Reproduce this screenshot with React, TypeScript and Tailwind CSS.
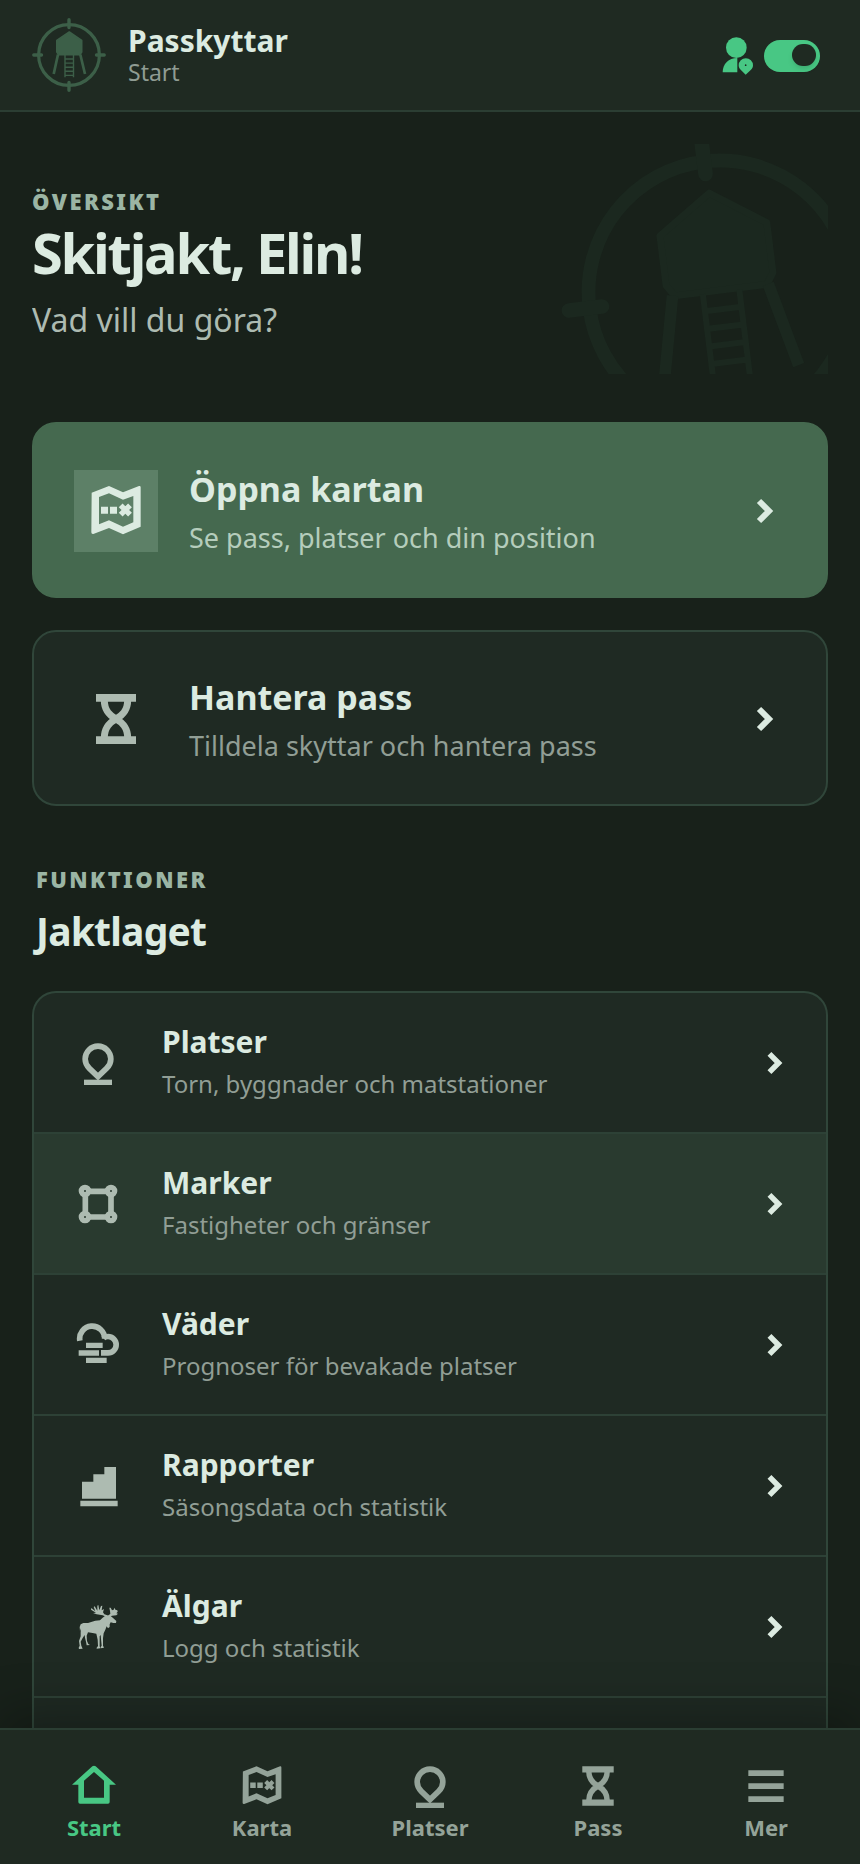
import type { ReactNode } from 'react'

type IconProps = { className?: string }

/* Icons */

function LogoMark({ className }: IconProps) {
  return (
    <svg viewBox="-37 -37 74 74" className={className} fill="none" stroke="currentColor" aria-hidden>
      <circle r="30.4" strokeWidth="3.2" />
      <path
        d="M0-35.2V-27.5M0 27.5V35.2M-35.2 0H-27.5M27.5 0H35.2"
        strokeWidth="3.4"
        strokeLinecap="round"
      />
      <path
        d="M.3-23-12.2-14.6V-3L-10.5-.4H11L12.7-3V-14.6Z"
        fill="currentColor"
        strokeWidth="1.6"
        strokeLinejoin="round"
      />
      <path d="M-11-.5-15.3 19M11.3-.5 16 19" strokeWidth="2.7" />
      <path d="M-4 0V22.3M4.5 0V22.3M-4 4H4.5M-4 8.1H4.5M-4 12.2H4.5M-4 16.3H4.5M-4 20.4H4.5" strokeWidth="1.4" />
    </svg>
  )
}

function UserPinIcon({ className }: IconProps) {
  return (
    <svg viewBox="0 0 96 114" className={className} fill="currentColor" aria-hidden>
      <circle cx="43" cy="32" r="31" />
      <path d="M2 106C2 80 20 63 46 63V106Z" />
      <path
        fillRule="evenodd"
        d="M71 113 56 98.500C52 95 50 90 50 85A21.500 21.500 0 0 1 93 85C93 90 91 95 87 98.500ZM71 82a2.500 2.500 0 1 0 0 5 2.500 2.500 0 0 0 0-5Z"
      />
    </svg>
  )
}

function MapIcon({ className }: IconProps) {
  return (
    <svg viewBox="0 0 168 168" className={className} fill="currentColor" aria-hidden>
      <path
        fillRule="evenodd"
        d="M11 29 63 9 105 28 153 9Q158 8 158 13V131L105 154 63 135 16 153Q10 154 10 148ZM33 42V124L63 112 105 131 136 118V39L105 50 63 31Z"
      />
      <path d="M39 71H60V92H39ZM66 71H87V92H66Z" />
      <path d="M98 67 126 95M126 67 98 95" stroke="currentColor" strokeWidth="16" />
    </svg>
  )
}

function HourglassIcon({ className }: IconProps) {
  return (
    <svg viewBox="0 0 168 168" className={className} fill="none" stroke="currentColor" aria-hidden>
      <path d="M24 20.500H144M24 147.500H144" strokeWidth="23" />
      <path d="M119 28C119 60 102 74 84 84S49 108 49 140M49 28C49 60 66 74 84 84S119 108 119 140" strokeWidth="21" />
    </svg>
  )
}

function PinIcon({ className }: IconProps) {
  return (
    <svg viewBox="0 0 132 132" className={className} fill="none" stroke="currentColor" aria-hidden>
      <path
        d="M66 107 40 82C32 74 27.500 65 27.500 54A38.500 38.500 0 0 1 104.500 54C104.500 65 100 74 92 82Z"
        strokeWidth="17"
      />
      <path d="M24 124H108" strokeWidth="16" />
    </svg>
  )
}

function AreaIcon({ className }: IconProps) {
  return (
    <svg viewBox="0 0 132 132" className={className} fill="none" stroke="currentColor" aria-hidden>
      <path d="M38 28H94M38 105H94M28 38V94M105 38V94" strokeWidth="17" />
      <g strokeWidth="16">
        <circle cx="27" cy="27" r="11" />
        <circle cx="105" cy="27" r="11" />
        <circle cx="27" cy="105" r="11" />
        <circle cx="105" cy="105" r="11" />
      </g>
    </svg>
  )
}

function WeatherIcon({ className }: IconProps) {
  return (
    <svg viewBox="0 0 132 132" className={className} fill="none" stroke="currentColor" strokeWidth="17" aria-hidden>
      <path d="M11.500 53A37.500 37.500 0 1 1 86 47" />
      <path d="M82 46C86 42 91 40.500 96 40.500A24.500 24.500 0 0 1 96 89.500H75" />
      <path d="M30 67H80M8 90H69M30 112H92" strokeWidth="16" />
    </svg>
  )
}

function ReportIcon({ className }: IconProps) {
  return (
    <svg viewBox="0 0 132 132" className={className} fill="currentColor" aria-hidden>
      <path d="M18 104V53H52V31H85V9H120V104ZM13 110H125V127H13Z" />
    </svg>
  )
}

function MooseIcon({ className }: IconProps) {
  return (
    <svg viewBox="0 0 132 132" className={className} fill="currentColor" aria-hidden>
      <path d="M14 58 22 54 36 54 48 50 58 47 72 46 80 38 88 32 96 31 104 33 112 40 121 48 120 54 112 54 104 52 101 58 101 66 96 70 92 64 88 74 83 85 81 100 81 122 84 128 74 130 74 126 77 122 75 102 74 90 71 94 71 124 73 130 62 131 62 128 66 123 65 104 61 86 50 84 36 82 32 92 33 108 37 117 42 120 32 121 30 110 27 98 26 90 20 99 14 110 16 122 20 131 9 132 8 128 11 122 9 108 14 94 14 82 15 70 12 78 11 66Z" />
      <path d="M92 36 80 31 62 28 51 24 60 23 45 14 46 9 58 19 53 6 56 4 64 17 64 2 67 0 70 16 75 3 79 2 77 16 84 12 81 22 85 28 94 31Z" />
      <path d="M95 34 103 26 102 18 100 8 104 8 108 16 113 14 116 8 118 14 124 16 125 20 121 25 126 26 121 31 108 32 100 36Z" />
    </svg>
  )
}

function HomeIcon({ className }: IconProps) {
  return (
    <svg viewBox="0 0 132 132" className={className} fill="currentColor" aria-hidden>
      <path
        fillRule="evenodd"
        d="M61 7Q66 3 71 7L132 62H113V114Q113 119 108 119H24Q19 119 19 114V62H0ZM36 50V101H96V50L66 24Z"
      />
    </svg>
  )
}

function MenuIcon({ className }: IconProps) {
  return (
    <svg viewBox="0 0 132 132" className={className} fill="none" stroke="currentColor" strokeWidth="17" aria-hidden>
      <path d="M13 27.500H119M13 66.500H119M13 105.500H119" />
    </svg>
  )
}

function ChevronIcon({ className }: IconProps) {
  return (
    <svg viewBox="0 0 44 44" className={className} fill="none" stroke="currentColor" strokeWidth="6" aria-hidden>
      <path d="M17 12 27 22 17 32" />
    </svg>
  )
}

/* Data */

const FEATURES = [
  { title: 'Platser', desc: 'Torn, byggnader och matstationer', Icon: PinIcon, active: false },
  { title: 'Marker', desc: 'Fastigheter och gränser', Icon: AreaIcon, active: true },
  { title: 'Väder', desc: 'Prognoser för bevakade platser', Icon: WeatherIcon, active: false },
  { title: 'Rapporter', desc: 'Säsongsdata och statistik', Icon: ReportIcon, active: false },
  { title: 'Älgar', desc: 'Logg och statistik', Icon: MooseIcon, active: false },
]

const TABS = [
  { label: 'Start', Icon: HomeIcon, active: true },
  { label: 'Karta', Icon: MapIcon, active: false },
  { label: 'Platser', Icon: PinIcon, active: false },
  { label: 'Pass', Icon: HourglassIcon, active: false },
  { label: 'Mer', Icon: MenuIcon, active: false },
]

function Eyebrow({ children }: { children: ReactNode }) {
  return <p className="text-[22px] leading-[30px] font-black tracking-[0.11em] text-[#9bb5a4]">{children}</p>
}

type ActionCardProps = { title: string; desc: string; icon: ReactNode; primary?: boolean }

function ActionCard({ title, desc, icon, primary }: ActionCardProps) {
  return (
    <a
      href="#"
      className={`flex h-44 items-center gap-[31px] rounded-3xl border-2 px-10 pt-0.5 ${
        primary ? 'border-[#45694f] bg-[#45694f]' : 'border-[#30463a] bg-[#1f2a23]'
      }`}
    >
      <span
        className={`flex h-[82px] w-[84px] shrink-0 items-center justify-center ${
          primary ? 'bg-[#5d8067] text-[#dcebe1]' : 'text-[#adbbb1]'
        }`}
      >
        {icon}
      </span>
      <span className="flex min-w-0 flex-1 flex-col gap-1.5">
        <span className="text-[34px] leading-[48px] font-bold text-[#dcebe1]">{title}</span>
        <span className={`text-[27px] leading-[38px] ${primary ? 'text-[#b5cdbc]' : 'text-[#919e95]'}`}>{desc}</span>
      </span>
      <ChevronIcon className="size-11 shrink-0 text-[#dcebe1]" />
    </a>
  )
}

export default function App() {
  return (
    <div className="flex h-dvh flex-col bg-[#18211a] font-['Noto_Sans',sans-serif] text-[#dcebe1]">
      {/* Top bar */}
      <header className="flex h-28 shrink-0 items-center border-b-2 border-[#2b3e33] bg-[#1f2a22] pr-10 pl-8">
        <LogoMark className="size-[74px] text-[#3c5f48]" />
        <div className="ml-[22px] flex-1">
          <p className="text-[30px] leading-[34px] font-bold">Passkyttar</p>
          <p className="text-[23px] leading-7 text-[#8f9c93]">Start</p>
        </div>
        <label className="flex items-center gap-2.5 pt-0.5 text-[#48c784]">
          <UserPinIcon className="h-[38px] w-8" />
          <input
            type="checkbox"
            role="switch"
            defaultChecked
            aria-label="Jaktläge"
            className="flex h-8 w-14 appearance-none items-center justify-end rounded-full bg-[#48c784] px-1 pb-0.5 before:h-[22px] before:w-6 before:rounded-full before:bg-[#1f2a22] before:shadow-md"
          />
        </label>
      </header>

      <main className="min-h-0 flex-1 overflow-y-auto px-8 pt-8 [scrollbar-width:none]">
        {/* Greeting */}
        <section className="relative overflow-hidden pt-[42px] pb-8">
          <LogoMark className="absolute -top-3 -right-[52px] size-80 rotate-[-7deg] text-[#1b281f]" />
          <div className="relative">
            <Eyebrow>ÖVERSIKT</Eyebrow>
            <h1 className="mt-1 text-[56px] leading-[64px] font-bold tracking-[-0.04em]">Skitjakt, Elin!</h1>
            <p className="mt-3.5 text-[32px] leading-[44px] text-[#adbbb1]">Vad vill du göra?</p>
          </div>
        </section>

        <div className="mt-12 flex flex-col gap-8">
          <ActionCard
            primary
            title="Öppna kartan"
            desc="Se pass, platser och din position"
            icon={<MapIcon className="size-14" />}
          />
          <ActionCard
            title="Hantera pass"
            desc="Tilldela skyttar och hantera pass"
            icon={<HourglassIcon className="size-14" />}
          />
        </div>

        {/* Features */}
        <section className="mt-[58px]">
          <div className="px-1">
            <Eyebrow>FUNKTIONER</Eyebrow>
            <h2 className="mt-[13px] text-[39px] leading-[48px] font-bold tracking-[-0.02em]">Jaktlaget</h2>
          </div>
          <ul className="mt-9 overflow-hidden rounded-t-3xl border-2 border-b-0 border-[#30463a] bg-[#1f2a23]">
            {FEATURES.map(({ title, desc, Icon, active }) => (
              <li key={title} className="border-b-2 border-[#2d4136]">
                <a href="#" className={`flex h-[139px] items-center gap-8 px-8 ${active ? 'bg-[#293a2f]' : ''}`}>
                  <span className="flex w-16 shrink-0 justify-center text-[#adbbb1]">
                    <Icon className="size-11" />
                  </span>
                  <span className="flex min-w-0 flex-1 flex-col gap-0.5">
                    <span className="text-[30px] leading-10 font-bold">{title}</span>
                    <span className="text-2xl leading-10 text-[#919e95]">{desc}</span>
                  </span>
                  <ChevronIcon className="size-10 shrink-0" />
                </a>
              </li>
            ))}
            <li className="h-[139px]" />
          </ul>
        </section>
      </main>

      {/* Bottom navigation */}
      <nav className="relative z-10 grid h-[136px] shrink-0 grid-cols-5 border-t-2 border-[#2b3e33] bg-[#1f2a22] px-2.5 pt-[34px] shadow-[0_-16px_48px_rgba(0,0,0,0.25)]">
        {TABS.map(({ label, Icon, active }) => (
          <a
            key={label}
            href="#"
            aria-current={active ? 'page' : undefined}
            className={`flex flex-col items-center gap-1 ${active ? 'text-[#48c784]' : 'text-[#94a399]'}`}
          >
            <Icon className="size-11" />
            <span className="text-[22px] leading-[30px] font-bold">{label}</span>
          </a>
        ))}
      </nav>
    </div>
  )
}
